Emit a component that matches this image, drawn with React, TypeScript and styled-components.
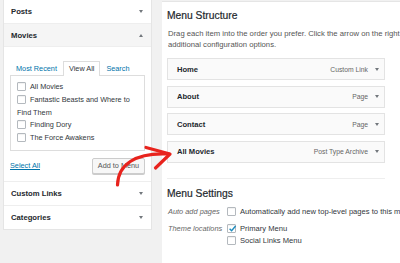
import React from 'react';
import styled, { createGlobalStyle } from 'styled-components';

const GlobalStyle = createGlobalStyle`
  html, body {
    margin: 0;
    padding: 0;
    background: #f1f1f1;
    overflow: hidden;
  }
  body {
    font-family: "Liberation Sans", Arial, sans-serif;
    color: #23282d;
  }
`;

const Page = styled.div`
  position: relative;
  display: flex;
  align-items: flex-start;
  width: 400px;
  height: 263px;
  overflow: hidden;
`;

const LeftColumn = styled.div`
  flex: 0 0 149px;
  margin-left: 3px;
  background: #fff;
  border: 1px solid #e5e5e5;
  border-top: none;
  box-sizing: border-box;
`;

const Section = styled.div<{ $open?: boolean; $last?: boolean }>`
  display: flex;
  align-items: center;
  justify-content: space-between;
  height: ${(p) => (p.$open || p.$last ? 23 : 24)}px;
  padding: 0 8px 0 7px;
  font-size: 7.7px;
  font-weight: bold;
  color: #23282d;
  background: ${(p) => (p.$open ? '#f5f5f5' : '#fff')};
  border-bottom: ${(p) => (p.$last ? 'none' : '1px solid #eee')};
  box-sizing: border-box;
`;

const Caret = styled.span<{ $up?: boolean }>`
  width: 0;
  height: 0;
  border-left: 2.5px solid transparent;
  border-right: 2.5px solid transparent;
  ${(p) => (p.$up ? 'border-bottom: 3px solid #72777c;' : 'border-top: 3px solid #72777c;')}
`;

const Body = styled.div`
  padding: 13px 6px 0 6px;
  border-bottom: 1px solid #eee;
`;

const Tabs = styled.div`
  display: flex;
  align-items: flex-end;
  height: 15px;
`;

const Tab = styled.div<{ $active?: boolean }>`
  font-size: 7.3px;
  line-height: 14px;
  padding: 0 5px;
  color: ${(p) => (p.$active ? '#32373c' : '#0073aa')};
  background: ${(p) => (p.$active ? '#fff' : 'transparent')};
  border: 1px solid ${(p) => (p.$active ? '#ddd' : 'transparent')};
  border-bottom: none;
  margin-bottom: -1px;
  position: relative;
  z-index: 1;
`;

const TabPanel = styled.div`
  border: 1px solid #ddd;
  padding: 5px 6px 5px 6px;
  font-size: 7.3px;
  line-height: 12.8px;
  color: #32373c;
`;

const Item = styled.div``;

const Box = styled.span`
  display: inline-block;
  position: relative;
  width: 9px;
  height: 9px;
  border: 1px solid #b4b9be;
  border-radius: 1px;
  background: #fff;
  box-sizing: border-box;
  vertical-align: -2px;
  margin-right: 4px;
  box-shadow: inset 0 1px 1px rgba(0, 0, 0, 0.06);
`;

const Check = styled.svg`
  position: absolute;
  left: 0;
  top: -1px;
  width: 9px;
  height: 9px;
`;

const Actions = styled.div`
  display: flex;
  align-items: center;
  justify-content: space-between;
  height: 30px;
`;

const SelectAll = styled.a`
  font-size: 7.3px;
  color: #0073aa;
  text-decoration: underline;
`;

const Button = styled.button`
  font-family: inherit;
  font-size: 7.3px;
  color: #555;
  height: 16px;
  width: 53px;
  padding: 0;
  background: #f7f7f7;
  border: 1px solid #ccc;
  border-radius: 2px;
  box-shadow: 0 1px 0 #ccc;
`;

const RightPanel = styled.div`
  flex: 0 0 260px;
  margin-left: 10px;
  margin-top: 1px;
  height: 262px;
  background: #fff;
  border-top: 1px solid #e5e5e5;
  padding: 0 0 0 5px;
  box-sizing: border-box;
`;

const Heading = styled.h2`
  margin: 0;
  font-size: 10.3px;
  font-weight: normal;
  color: #23282d;
  line-height: 12px;
  padding-top: 8px;
  -webkit-text-stroke: 0.2px #23282d;
`;

const Desc = styled.p`
  margin: 6px 0 0 1px;
  font-size: 7.7px;
  line-height: 11px;
  color: #555;
  white-space: nowrap;
`;

const MenuList = styled.div`
  display: flex;
  flex-direction: column;
  gap: 5.5px;
  margin-top: 8px;
  width: 218px;
`;

const MenuItem = styled.div`
  display: flex;
  align-items: center;
  justify-content: space-between;
  height: 22px;
  padding: 0 5px 0 9px;
  background: #fafafa;
  border: 1px solid #e3e3e3;
  box-sizing: border-box;
`;

const ItemTitle = styled.span`
  font-size: 7.6px;
  font-weight: bold;
  color: #23282d;
`;

const ItemMeta = styled.span`
  display: flex;
  align-items: center;
  gap: 7px;
  font-size: 6.8px;
  color: #666;
`;

const Divider = styled.div`
  width: 218px;
  height: 1px;
  background: #eee;
  margin-top: 15px;
`;

const SettingsHeading = styled(Heading)`
  padding-top: 9px;
`;

const SettingRow = styled.div<{ $gap: number }>`
  display: flex;
  margin-top: ${(p) => p.$gap}px;
  font-size: 7.4px;
  line-height: 12px;
`;

const SettingLabel = styled.div`
  flex: 0 0 59px;
  font-style: italic;
  color: #666;
  padding-left: 1px;
`;

const SettingOptions = styled.div`
  color: #32373c;
  white-space: nowrap;
  font-size: 7.6px;
`;

const Arrow = styled.svg`
  position: absolute;
  left: 0;
  top: 0;
  pointer-events: none;
`;

function CheckBox({ checked }: { checked?: boolean }) {
  return (
    <Box>
      {checked && (
        <Check viewBox="0 0 9 9">
          <path d="M1.6 4.8 L3.6 6.8 L7.6 2" fill="none" stroke="#1e8cbe" strokeWidth="1.4" />
        </Check>
      )}
    </Box>
  );
}

const movies = ['All Movies', 'Fantastic Beasts and Where to Find Them', 'Finding Dory', 'The Force Awakens'];

const menuItems = [
  { title: 'Home', type: 'Custom Link' },
  { title: 'About', type: 'Page' },
  { title: 'Contact', type: 'Page' },
  { title: 'All Movies', type: 'Post Type Archive' },
];

export default function App() {
  return (
    <Page>
      <GlobalStyle />
      <LeftColumn>
        <Section>
          Posts <Caret />
        </Section>
        <Section $open>
          Movies <Caret $up />
        </Section>
        <Body>
          <Tabs>
            <Tab>Most Recent</Tab>
            <Tab $active>View All</Tab>
            <Tab>Search</Tab>
          </Tabs>
          <TabPanel>
            {movies.map((m) => (
              <Item key={m}>
                <CheckBox />
                {m}
              </Item>
            ))}
          </TabPanel>
          <Actions>
            <SelectAll>Select All</SelectAll>
            <Button>Add to Menu</Button>
          </Actions>
        </Body>
        <Section>
          Custom Links <Caret />
        </Section>
        <Section $last>
          Categories <Caret />
        </Section>
      </LeftColumn>

      <RightPanel>
        <Heading>Menu Structure</Heading>
        <Desc>
          Drag each item into the order you prefer. Click the arrow on the right of the item to reveal
          <br />
          additional configuration options.
        </Desc>
        <MenuList>
          {menuItems.map((it) => (
            <MenuItem key={it.title}>
              <ItemTitle>{it.title}</ItemTitle>
              <ItemMeta>
                {it.type}
                <Caret />
              </ItemMeta>
            </MenuItem>
          ))}
        </MenuList>
        <Divider />
        <SettingsHeading>Menu Settings</SettingsHeading>
        <SettingRow $gap={6}>
          <SettingLabel>Auto add pages</SettingLabel>
          <SettingOptions>
            <CheckBox />
            Automatically add new top-level pages to this menu
          </SettingOptions>
        </SettingRow>
        <SettingRow $gap={5}>
          <SettingLabel>Theme locations</SettingLabel>
          <SettingOptions>
            <div>
              <CheckBox checked />
              Primary Menu
            </div>
            <div>
              <CheckBox />
              Social Links Menu
            </div>
          </SettingOptions>
        </SettingRow>
      </RightPanel>

      <Arrow width="400" height="263" viewBox="0 0 400 263">
        <path
          d="M117.5 185 C118 165 135 152 169 154"
          fill="none"
          stroke="#e8231d"
          strokeWidth="3.2"
          strokeLinecap="round"
        />
        <path
          d="M146 147.5 L170 154 L155.5 168"
          fill="none"
          stroke="#e8231d"
          strokeWidth="3.2"
          strokeLinecap="round"
          strokeLinejoin="round"
        />
      </Arrow>
    </Page>
  );
}
